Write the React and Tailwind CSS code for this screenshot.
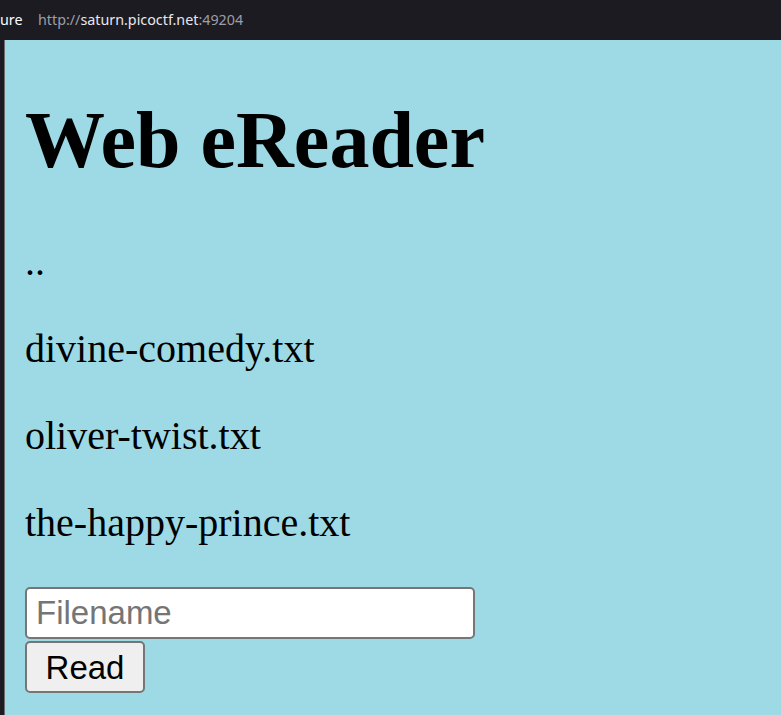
export default function App() {
  return (
    <div className="w-[781px] h-[715px] overflow-hidden flex flex-col bg-[#1c1b22]">
      <div className="h-[40px] shrink-0 flex items-center text-[14.3px] font-['Noto_Sans',sans-serif] relative">
        <span className="absolute left-0 top-[9px] text-[#fbfbfe]">ure</span>
        <span className="absolute left-[38px] top-[9px] text-[#9f9ea6]">
          http://<span className="text-[#e8e8ec]">saturn.picoctf.net</span>:49204
        </span>
      </div>
      <div className="flex flex-1 min-h-0">
        <div className="w-[4px] bg-[#1c1b22]" />
        <div className="w-[1px] bg-[#6b6b70]" />
        <div className="flex-1 bg-[#9ddae6] pl-[20px] font-['Liberation_Serif',serif] text-black">
          <h1 className="mt-[54px] text-[80px] leading-[92px] font-bold">Web eReader</h1>
          <div className="mt-[52px] flex flex-col gap-[40px] text-[40px] leading-[47px]">
            <p>..</p>
            <p>divine-comedy.txt</p>
            <p>oliver-twist.txt</p>
            <p>the-happy-prince.txt</p>
          </div>
          <div className="mt-[41px] flex flex-col items-start font-['Liberation_Sans',sans-serif]">
            <input
              type="text"
              placeholder="Filename"
              className="w-[450px] h-[52px] bg-white border-2 border-[#767676] rounded-[5px] px-[9px] text-[33px] placeholder:text-[#757575] outline-none"
            />
            <button className="mt-[2px] w-[120px] h-[52px] bg-[#efefef] border-2 border-[#767676] rounded-[5px] text-[33px] text-black">
              Read
            </button>
          </div>
        </div>
      </div>
    </div>
  );
}
